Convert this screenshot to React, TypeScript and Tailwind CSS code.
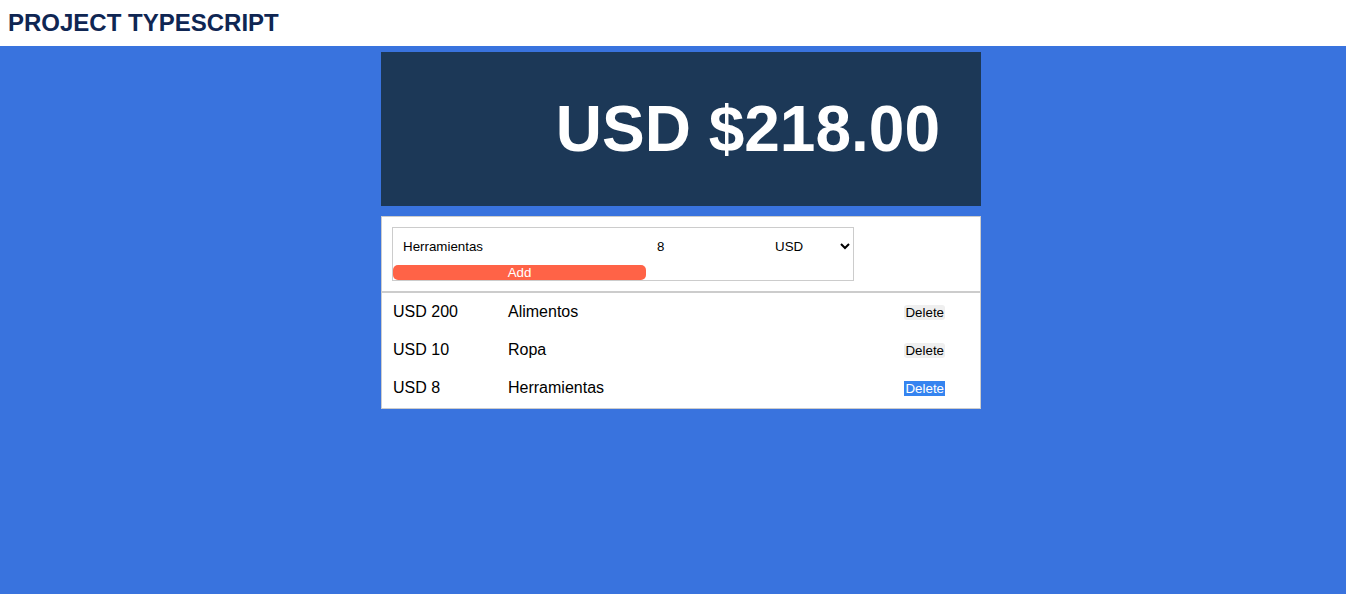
import React from 'react';

interface Expense {
    id: number;
    amount: number;
    category: string;
}

const expenses: Expense[] = [
    { id: 1, amount: 200, category: 'Alimentos' },
    { id: 2, amount: 10, category: 'Ropa' },
    { id: 3, amount: 8, category: 'Herramientas' },
];

export default function App() {
    const total = expenses.reduce((acc, e) => acc + e.amount, 0);

    return (
        <div className="min-h-[594px] bg-[#3973de] font-['Liberation_Sans',Arial,sans-serif]">
            <header className="h-[46px] bg-white flex items-center px-2">
                <h1 className="text-[24px] font-bold text-[#0f2653] leading-none">PROJECT TYPESCRIPT</h1>
            </header>

            <div className="pl-[16px]">
                <main className="w-[600px] mx-auto pt-[6px]">
                    {/* Total */}
                    <div className="h-[154px] bg-[#1c3857] flex items-center justify-end pr-[41px]">
                        <span className="text-white font-bold text-[64px] leading-none">USD ${total.toFixed(2)}</span>
                    </div>

                    {/* Card */}
                    <div className="mt-[10px] bg-white border border-[#ccc]">
                        <div className="p-[10px]">
                            <form className="w-[462px] border border-[#ccc] flex flex-wrap pt-[8px]" onSubmit={(e) => e.preventDefault()}>
                                <input
                                    type="text"
                                    defaultValue="Herramientas"
                                    className="w-[254px] h-[20px] pl-[10px] text-[13.33px] text-black outline-none"
                                />
                                <input
                                    type="number"
                                    defaultValue={8}
                                    className="w-[124px] h-[20px] pl-[10px] text-[13.33px] text-black outline-none [appearance:textfield]"
                                />
                                <select className="w-[82px] h-[20px] text-[13.33px] text-black outline-none" defaultValue="USD">
                                    <option>USD</option>
                                    <option>EUR</option>
                                </select>
                                <button
                                    type="submit"
                                    className="w-[253px] h-[15px] mt-[9px] bg-[#ff6347] text-white text-[13.33px] leading-none rounded-[5px]"
                                >
                                    Add
                                </button>
                            </form>
                        </div>

                        <div className="h-[2px] bg-[#ccc]" />

                        <ul className="pt-[1px]">
                            {expenses.map((e) => (
                                <li key={e.id} className="h-[38px] flex items-center pl-[11px] pr-[35px] pb-[2px] text-[16px] text-black">
                                    <span className="w-[115px]">USD {e.amount}</span>
                                    <span className="flex-1">{e.category}</span>
                                    <button
                                        className={`text-[13.33px] leading-[15px] px-[1px] ${e.id === 3 ? 'bg-[#3584f0] text-white' : 'bg-[#efefef] text-black rounded-[3px]'}`}
                                    >
                                        Delete
                                    </button>
                                </li>
                            ))}
                        </ul>
                    </div>
                </main>
            </div>
        </div>
    );
}
